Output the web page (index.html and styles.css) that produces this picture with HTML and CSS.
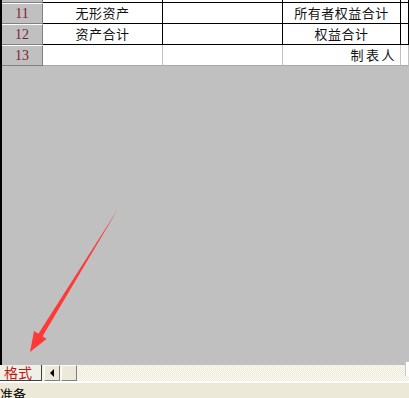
FILE: index.html
```html
<!DOCTYPE html>
<html>
<head>
<meta charset="utf-8">
<link rel="stylesheet" href="styles.css">
</head>
<body>
<div class="sheet">
  <div class="rows">
    <div class="row">
      <div class="hd">10</div>
      <div class="cell c">无形及其他资产</div>
      <div class="cell"></div>
      <div class="cell c">所有者权益小计</div>
      <div class="cell"></div>
    </div>
    <div class="row">
      <div class="hd">11</div>
      <div class="cell c">无形资产</div>
      <div class="cell"></div>
      <div class="cell c">所有者权益合计</div>
      <div class="cell"></div>
    </div>
    <div class="row">
      <div class="hd">12</div>
      <div class="cell c">资产合计</div>
      <div class="cell"></div>
      <div class="cell c">权益合计</div>
      <div class="cell"></div>
    </div>
    <div class="row grid">
      <div class="hd">13</div>
      <div class="cell"></div>
      <div class="cell"></div>
      <div class="cell r">制表人</div>
      <div class="cell"></div>
    </div>
  </div>
</div>
<div class="tabbar">
  <div class="tab">格式</div>
  <div class="btn"><span class="tri"></span></div>
  <div class="btn"></div>
  <div class="fill"></div>
  <div class="edge"></div>
</div>
<div class="gap"></div>
<div class="status">准备</div>
<svg class="arrow" width="409" height="398" viewBox="0 0 409 398">
  <polygon points="118,209 42.6,336.3 46.5,339 30,352 34,331 38.4,333.7" fill="#ff3838"/>
</svg>
</body>
</html>
```
FILE: styles.css
```css
html, body {
  margin: 0;
  padding: 0;
  width: 409px;
  height: 398px;
  overflow: hidden;
  background: #ece9d8;
  font-family: "Noto Sans CJK SC", "Liberation Sans", sans-serif;
}
.sheet {
  height: 365px;
  box-sizing: border-box;
  border-left: 2px solid #000;
  background: #c0c0c0;
  overflow: hidden;
}
.rows {
  margin-top: -18px;
}
.row {
  display: grid;
  grid-template-columns: 41px 120px 120px 118px 1fr;
  height: 21px;
}
.hd {
  box-sizing: border-box;
  background: #c0c0c0;
  border-top: 1px solid #fff;
  border-right: 1px solid #808080;
  border-bottom: 1px solid #808080;
  color: #7a1f35;
  font-family: "Liberation Serif", serif;
  font-size: 14px;
  line-height: 19px;
  text-align: center;
}
.cell {
  box-sizing: border-box;
  background: #fff;
  border-right: 1px solid #000;
  border-bottom: 1px solid #000;
  font-size: 13px;
  line-height: 20px;
  color: #111;
  white-space: nowrap;
  overflow: hidden;
}
.c {
  text-align: center;
  letter-spacing: 0.5px;
}
.r {
  text-align: right;
  padding-right: 3px;
  letter-spacing: 2.5px;
}
.grid .cell {
  border-right-color: #c0c0c0;
  border-bottom-color: #a8a8a8;
}
.tabbar {
  display: flex;
  height: 16px;
  background: repeating-conic-gradient(#fbfbf3 0 25%, #ecebd9 0 50%) 0 0 / 2px 2px;
  position: relative;
}
.tab {
  width: 42px;
  box-sizing: border-box;
  background: #f1f0e6;
  border-right: 1px solid #404040;
  border-bottom: 1px solid #404040;
  color: #c01515;
  font-size: 14px;
  line-height: 15px;
  padding-left: 4px;
}
.btn {
  width: 16px;
  margin-left: 1px;
  box-sizing: border-box;
  background: #ece9d8;
  border-top: 1px solid #fff;
  border-left: 1px solid #fff;
  border-right: 1px solid #808080;
  border-bottom: 1px solid #808080;
  display: flex;
  align-items: center;
  justify-content: center;
}
.tab + .btn {
  margin-left: 2px;
}
.tri {
  width: 0;
  height: 0;
  border-top: 4px solid transparent;
  border-bottom: 4px solid transparent;
  border-right: 4px solid #000;
}
.fill {
  flex: 1;
}
.edge {
  width: 3px;
  background: #fff;
  border-left: 1px solid #c8c8c8;
  border-top: 1px solid #c8c8c8;
  margin-top: -4px;
  height: 14px;
}
.gap {
  height: 2px;
  background: #fff;
}
.status {
  height: 15px;
  background: #ece9d8;
  font-size: 13px;
  line-height: 22px;
  color: #000;
  padding-left: 0;
}
.arrow {
  position: absolute;
  left: 0;
  top: 0;
  pointer-events: none;
}
```
